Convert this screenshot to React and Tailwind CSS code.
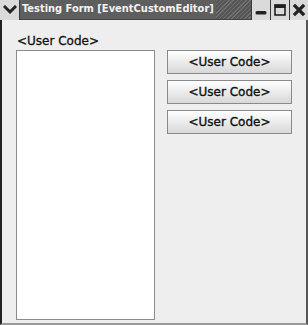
import React from 'react';

const TitleButton = ({ children }) => (
  <div className="w-[19px] h-[20px] flex items-center justify-center bg-[#dadada] border-l border-[#3a3a3a]">
    {children}
  </div>
);

const App = () => {
  return (
    <div className="w-[308px] h-[325px] flex flex-col bg-[#eeeeee] overflow-hidden" style={{ fontFamily: "'DejaVu Sans', sans-serif" }}>
      {/* Title bar */}
      <div className="h-[20px] flex bg-[#5e5e5e] border-b border-[#444]">
        <div className="w-[20px] h-[20px] flex items-center justify-center bg-[#dadada] border-r border-[#3a3a3a]">
          <svg width="14" height="10" viewBox="0 0 14 10">
            <path d="M2 2 L7 7 L12 2" fill="none" stroke="#222" strokeWidth="3" strokeLinecap="square" />
          </svg>
        </div>
        <div className="pl-[2px] flex items-center text-[11px] font-bold text-[#f2f2f2] whitespace-nowrap" style={{ fontFamily: "'DejaVu Sans Condensed', 'DejaVu Sans', sans-serif", fontStretch: 'condensed' }}>
          Testing Form [EventCustomEditor]
        </div>
        <div className="flex-1 ml-[2px] bg-[repeating-linear-gradient(135deg,#707070_0px,#707070_1px,#565656_1px,#565656_3px)]" />
        <TitleButton>
          <svg width="14" height="14" viewBox="0 0 14 14">
            <rect x="1.5" y="8" width="11" height="3.5" rx="1.5" fill="#222" />
          </svg>
        </TitleButton>
        <TitleButton>
          <svg width="14" height="14" viewBox="0 0 14 14">
            <rect x="2" y="2" width="10" height="10" fill="none" stroke="#222" strokeWidth="1.6" />
            <rect x="1.5" y="1.5" width="11" height="3.5" fill="#222" />
          </svg>
        </TitleButton>
        <TitleButton>
          <svg width="14" height="14" viewBox="0 0 14 14">
            <path d="M3 3 L11 11 M11 3 L3 11" stroke="#222" strokeWidth="3.2" strokeLinecap="square" />
          </svg>
        </TitleButton>
      </div>

      {/* Body */}
      <div className="flex-1 flex border-l-2 border-r-2 border-b-2 border-l-[#222] border-r-[#555] border-b-[#9a9a9a] pl-[14px] pt-[14px] pb-[3px]">
        <div className="w-[139px] flex flex-col">
          <div className="h-[16px] pl-[1px] text-[12px] leading-[14px] text-[#111] [-webkit-text-stroke:0.3px_#111]">&lt;User Code&gt;</div>
          <div className="flex-1 bg-white border border-[#8c8c8c]" />
        </div>
        <div className="ml-[12px] pt-[16px] flex flex-col gap-[6px]">
          {[0, 1, 2].map((i) => (
            <button
              key={i}
              className="w-[125px] h-[24px] flex items-center justify-center border border-[#8a8a8a] bg-linear-to-b from-[#ffffff] to-[#d8d8d8] text-[12px] text-[#111] [-webkit-text-stroke:0.35px_#111]"
            >
              &lt;User Code&gt;
            </button>
          ))}
        </div>
      </div>
    </div>
  );
};

export default App;
